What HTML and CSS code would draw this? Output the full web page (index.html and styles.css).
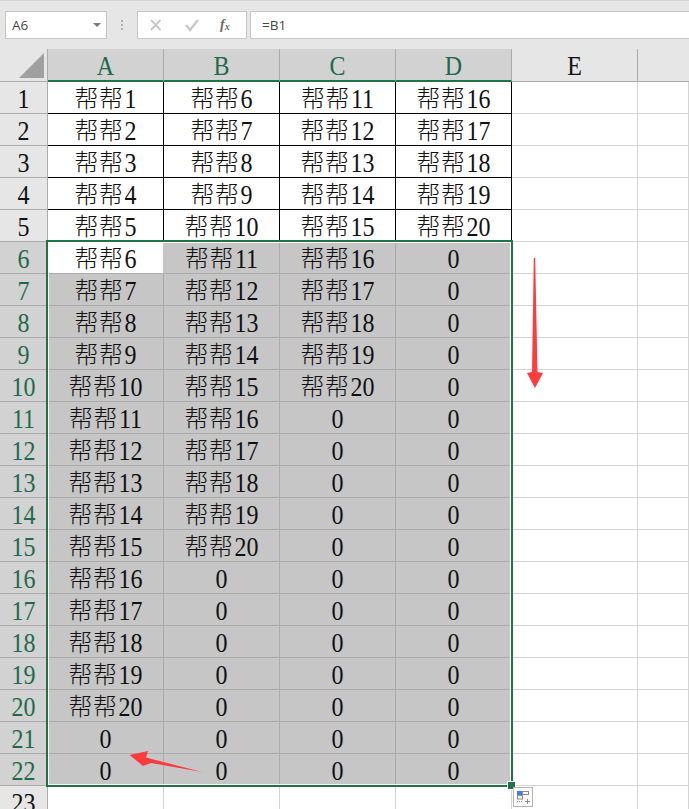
FILE: index.html
```html
<!DOCTYPE html>
<html lang="zh">
<head>
<meta charset="utf-8">
<title>Sheet</title>
<link rel="stylesheet" href="styles.css">
</head>
<body>
<div class="app">
  <div class="formula-bar">
    <div class="name-box"><span>A6</span><i class="caret"></i></div>
    <div class="grip"></div>
    <div class="fx-box">
      <svg class="ico" width="16" height="14" viewBox="0 0 16 14"><path d="M3 2l9.5 10M12.5 2L3 12" stroke="#c8c8c8" stroke-width="2" fill="none"/></svg>
      <svg class="ico" width="16" height="14" viewBox="0 0 16 14"><path d="M2 7l4 5 8-10" stroke="#c8c8c8" stroke-width="2.4" fill="none"/></svg>
      <span class="fx">f<sub>x</sub></span>
    </div>
    <div class="formula">=B1</div>
  </div>
  <div class="sheet">
    <div class="grid">
      <div class="corner"><svg width="48" height="32" viewBox="0 0 48 32"><path d="M19 29L44 4v25z" fill="#a0a0a0"/></svg></div>
      <div class="ch on"><span class="n">A</span></div><div class="ch on"><span class="n">B</span></div><div class="ch on"><span class="n">C</span></div><div class="ch on"><span class="n">D</span></div><div class="ch"><span class="n">E</span></div><div class="ch last"></div>

      <div class="rh"><span class="n">1</span></div><div class="c k">帮帮<span class="n t">1</span></div><div class="c k">帮帮<span class="n t">6</span></div><div class="c k">帮帮<span class="n t">11</span></div><div class="c k">帮帮<span class="n t">16</span></div><div class="c"></div><div class="c"></div>
      <div class="rh"><span class="n">2</span></div><div class="c k">帮帮<span class="n t">2</span></div><div class="c k">帮帮<span class="n t">7</span></div><div class="c k">帮帮<span class="n t">12</span></div><div class="c k">帮帮<span class="n t">17</span></div><div class="c"></div><div class="c"></div>
      <div class="rh"><span class="n">3</span></div><div class="c k">帮帮<span class="n t">3</span></div><div class="c k">帮帮<span class="n t">8</span></div><div class="c k">帮帮<span class="n t">13</span></div><div class="c k">帮帮<span class="n t">18</span></div><div class="c"></div><div class="c"></div>
      <div class="rh"><span class="n">4</span></div><div class="c k">帮帮<span class="n t">4</span></div><div class="c k">帮帮<span class="n t">9</span></div><div class="c k">帮帮<span class="n t">14</span></div><div class="c k">帮帮<span class="n t">19</span></div><div class="c"></div><div class="c"></div>
      <div class="rh"><span class="n">5</span></div><div class="c k">帮帮<span class="n t">5</span></div><div class="c k">帮帮<span class="n t">10</span></div><div class="c k">帮帮<span class="n t">15</span></div><div class="c k">帮帮<span class="n t">20</span></div><div class="c"></div><div class="c"></div>
      <div class="rh on"><span class="n">6</span></div><div class="c active">帮帮<span class="n t">6</span></div><div class="c s">帮帮<span class="n t">11</span></div><div class="c s">帮帮<span class="n t">16</span></div><div class="c s"><span class="n">0</span></div><div class="c"></div><div class="c"></div>
      <div class="rh on"><span class="n">7</span></div><div class="c s">帮帮<span class="n t">7</span></div><div class="c s">帮帮<span class="n t">12</span></div><div class="c s">帮帮<span class="n t">17</span></div><div class="c s"><span class="n">0</span></div><div class="c"></div><div class="c"></div>
      <div class="rh on"><span class="n">8</span></div><div class="c s">帮帮<span class="n t">8</span></div><div class="c s">帮帮<span class="n t">13</span></div><div class="c s">帮帮<span class="n t">18</span></div><div class="c s"><span class="n">0</span></div><div class="c"></div><div class="c"></div>
      <div class="rh on"><span class="n">9</span></div><div class="c s">帮帮<span class="n t">9</span></div><div class="c s">帮帮<span class="n t">14</span></div><div class="c s">帮帮<span class="n t">19</span></div><div class="c s"><span class="n">0</span></div><div class="c"></div><div class="c"></div>
      <div class="rh on"><span class="n">10</span></div><div class="c s">帮帮<span class="n t">10</span></div><div class="c s">帮帮<span class="n t">15</span></div><div class="c s">帮帮<span class="n t">20</span></div><div class="c s"><span class="n">0</span></div><div class="c"></div><div class="c"></div>
      <div class="rh on"><span class="n">11</span></div><div class="c s">帮帮<span class="n t">11</span></div><div class="c s">帮帮<span class="n t">16</span></div><div class="c s"><span class="n">0</span></div><div class="c s"><span class="n">0</span></div><div class="c"></div><div class="c"></div>
      <div class="rh on"><span class="n">12</span></div><div class="c s">帮帮<span class="n t">12</span></div><div class="c s">帮帮<span class="n t">17</span></div><div class="c s"><span class="n">0</span></div><div class="c s"><span class="n">0</span></div><div class="c"></div><div class="c"></div>
      <div class="rh on"><span class="n">13</span></div><div class="c s">帮帮<span class="n t">13</span></div><div class="c s">帮帮<span class="n t">18</span></div><div class="c s"><span class="n">0</span></div><div class="c s"><span class="n">0</span></div><div class="c"></div><div class="c"></div>
      <div class="rh on"><span class="n">14</span></div><div class="c s">帮帮<span class="n t">14</span></div><div class="c s">帮帮<span class="n t">19</span></div><div class="c s"><span class="n">0</span></div><div class="c s"><span class="n">0</span></div><div class="c"></div><div class="c"></div>
      <div class="rh on"><span class="n">15</span></div><div class="c s">帮帮<span class="n t">15</span></div><div class="c s">帮帮<span class="n t">20</span></div><div class="c s"><span class="n">0</span></div><div class="c s"><span class="n">0</span></div><div class="c"></div><div class="c"></div>
      <div class="rh on"><span class="n">16</span></div><div class="c s">帮帮<span class="n t">16</span></div><div class="c s"><span class="n">0</span></div><div class="c s"><span class="n">0</span></div><div class="c s"><span class="n">0</span></div><div class="c"></div><div class="c"></div>
      <div class="rh on"><span class="n">17</span></div><div class="c s">帮帮<span class="n t">17</span></div><div class="c s"><span class="n">0</span></div><div class="c s"><span class="n">0</span></div><div class="c s"><span class="n">0</span></div><div class="c"></div><div class="c"></div>
      <div class="rh on"><span class="n">18</span></div><div class="c s">帮帮<span class="n t">18</span></div><div class="c s"><span class="n">0</span></div><div class="c s"><span class="n">0</span></div><div class="c s"><span class="n">0</span></div><div class="c"></div><div class="c"></div>
      <div class="rh on"><span class="n">19</span></div><div class="c s">帮帮<span class="n t">19</span></div><div class="c s"><span class="n">0</span></div><div class="c s"><span class="n">0</span></div><div class="c s"><span class="n">0</span></div><div class="c"></div><div class="c"></div>
      <div class="rh on"><span class="n">20</span></div><div class="c s">帮帮<span class="n t">20</span></div><div class="c s"><span class="n">0</span></div><div class="c s"><span class="n">0</span></div><div class="c s"><span class="n">0</span></div><div class="c"></div><div class="c"></div>
      <div class="rh on"><span class="n">21</span></div><div class="c s"><span class="n">0</span></div><div class="c s"><span class="n">0</span></div><div class="c s"><span class="n">0</span></div><div class="c s"><span class="n">0</span></div><div class="c"></div><div class="c"></div>
      <div class="rh on"><span class="n">22</span></div><div class="c s"><span class="n">0</span></div><div class="c s"><span class="n">0</span></div><div class="c s"><span class="n">0</span></div><div class="c s"><span class="n">0</span></div><div class="c"></div><div class="c"></div>
      <div class="rh"><span class="n">23</span></div><div class="c"></div><div class="c"></div><div class="c"></div><div class="c"></div><div class="c"></div><div class="c"></div>
    </div>
    <div class="selection"><i class="handle"></i></div>
    <div class="paste">
      <svg width="20" height="20" viewBox="0 0 20 20">
        <rect x="4" y="4" width="5" height="4" fill="#3f7ff0"/>
        <rect x="9.5" y="4.5" width="6" height="3" fill="#fff" stroke="#8a8a8a"/>
        <rect x="4.5" y="8.5" width="5" height="3.5" fill="#fff" stroke="#8a8a8a"/>
        <path d="M4 14.5h6" stroke="#8a8a8a" stroke-dasharray="1 1" fill="none"/>
        <path d="M12 14.5h5M14.5 12v5" stroke="#8a8a8a" fill="none"/>
      </svg>
    </div>
    <svg class="arrows" width="689" height="760" viewBox="0 49 689 760">
      <path d="M533.8 258L535.2 258 537.5 372 543 373 535 388 527 373 532 372z" fill="#ff3b3f"/>
      <path d="M129.5 755L148 751 146 757.5 202 772 151 763 143 766z" fill="#ff3b3f"/>
    </svg>
  </div>
</div>
</body>
</html>
```
FILE: styles.css
```css
* { box-sizing: border-box; }
html, body { margin: 0; padding: 0; height: 809px; overflow: hidden; background: #e6e6e6; }
.app { width: 689px; height: 809px; overflow: hidden; display: flex; flex-direction: column; }

.formula-bar {
  height: 49px;
  flex: none;
  display: flex;
  align-items: flex-start;
  padding: 10px 0 0 5px;
  border-top: 1px solid #d4d4d4;
  background: #e6e6e6;
  font-family: "Open Sans", "Noto Sans", sans-serif;
  font-size: 13.5px;
  color: #444;
}
.name-box, .fx-box, .formula {
  height: 28px;
  background: #fff;
  border: 1px solid #c6c6c6;
  display: flex;
  align-items: center;
}
.name-box { width: 102px; padding: 0 5px 0 6px; justify-content: space-between; }
.caret { width: 0; height: 0; border-left: 4px solid transparent; border-right: 4px solid transparent; border-top: 4px solid #7a7a7a; }
.grip { width: 2px; height: 10px; margin: 9px 14px 0 14px; background: repeating-linear-gradient(#b0b0b0 0 2px, transparent 2px 4px); }
.fx-box { width: 110px; margin-right: 3px; padding-left: 10px; }
.ico { margin-right: 20px; flex: none; }
.fx { font-family: "Liberation Serif", serif; font-style: italic; font-weight: bold; font-size: 14px; color: #6a6a6a; }
.fx sub { font-size: 10px; vertical-align: -1px; }
.formula { flex: 1; padding-left: 11px; border-right: none; }

.sheet { position: relative; flex: none; height: 760px; }
.grid {
  display: grid;
  grid-template-columns: 48px 116px 116px 116px 116px 126px 1fr;
  grid-template-rows: 33px repeat(23, 32px);
  background: #fff;
  font-family: "Liberation Serif", "Noto Sans CJK SC", serif;
  font-size: 24px;
  font-weight: 300;
  color: #111;
}
.n { display: inline-block; transform: scaleY(1.13); letter-spacing: 0; }
.n.t { margin-left: 1px; }
.corner { background: #e6e6e6; border-right: 1px solid #ababab; border-bottom: 1px solid #ababab; }
.corner svg { display: block; }
.ch, .rh, .c { display: flex; align-items: center; justify-content: center; line-height: 1; padding-top: 2px; }
.ch { background: #e6e6e6; border-right: 1px solid #ababab; border-bottom: 1px solid #ababab; }
.ch.last { border-right: none; }
.ch.on { background: #d2d2d2; color: #1d6b4a; border-bottom: 2px solid #217346; }
.rh { background: #e6e6e6; border-right: 1px solid #ababab; border-bottom: 1px solid #ababab; }
.rh.on { background: #d2d2d2; color: #1d6b4a; }
.c { background: #fff; border-right: 1px solid #d4d4d4; border-bottom: 1px solid #d4d4d4; letter-spacing: 0.5px; }
.c.k { border-right-color: #000; border-bottom-color: #000; }
.c.s { background: #c6c6c6; border-right-color: #ababab; border-bottom-color: #ababab; }
.c.active { background: #fff; border-right-color: #c6c6c6; border-bottom-color: #ababab; }

.selection {
  position: absolute;
  left: 46px;
  top: 191px;
  width: 467px;
  height: 547px;
  border: 2px solid #217346;
  box-shadow: inset 0 0 0 1px #fff;
}
.handle {
  position: absolute;
  right: -4px;
  bottom: -4px;
  width: 7px;
  height: 7px;
  background: #217346;
  outline: 1px solid #fff;
}
.paste {
  position: absolute;
  left: 513px;
  top: 738px;
  width: 20px;
  height: 20px;
  background: #fff;
  outline: 1px solid #b4b4b4;
  outline-offset: -1px;
}
.paste svg { display: block; }
.arrows { position: absolute; left: 0; top: 0; pointer-events: none; }
```
